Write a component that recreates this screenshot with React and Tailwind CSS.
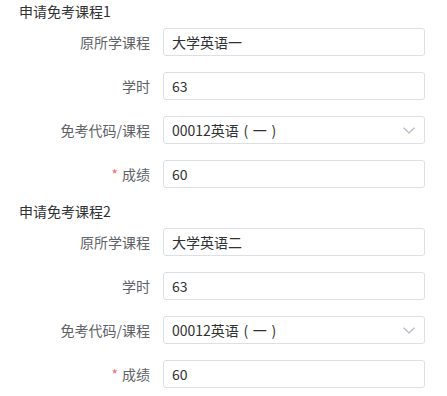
const sections = [
  { title: "申请免考课程1", course: "大学英语一" },
  { title: "申请免考课程2", course: "大学英语二" },
];

function Row({ label, required, children }) {
  return (
    <div className="flex items-center h-[28px]">
      <label className="w-[150px] text-right text-[14px] leading-[28px] text-[#606266] shrink-0">
        {required && <span className="text-[#f56c6c] mr-[4px]">*</span>}
        {label}
      </label>
      <div className="ml-[13px] w-[262px]">{children}</div>
    </div>
  );
}

function Box({ children, select }) {
  return (
    <div className="relative h-[28px] border border-[#dcdfe6] rounded-[3px] bg-white pl-[8px] flex items-center text-[14px] text-[#303133]">
      <span>{children}</span>
      {select && (
        <svg
          className="absolute right-[9px] top-[10px]"
          width="12"
          height="7"
          viewBox="0 0 12 7"
          fill="none"
        >
          <path d="M0.5 0.7 L6 6 L11.5 0.7" stroke="#b4b8c0" strokeWidth="1.2" />
        </svg>
      )}
    </div>
  );
}

export default function App() {
  return (
    <div
      className="w-[447px] h-[396px] bg-white overflow-hidden"
      style={{ fontFamily: '"Noto Sans CJK SC", "Noto Sans", sans-serif' }}
    >
      {sections.map((s, i) => (
        <section key={i} className="h-[200px]">
          <h3 className="pl-[19px] text-[14px] leading-[22px] font-normal text-[#303133] mb-[6px]">
            {s.title}
          </h3>
          <div className="flex flex-col gap-[16px]">
            <Row label="原所学课程">
              <Box>{s.course}</Box>
            </Row>
            <Row label="学时">
              <Box>63</Box>
            </Row>
            <Row label="免考代码/课程">
              <Box select>
                00012英语
                <span className="inline-block w-[14px] text-center">(</span>
                一
                <span className="inline-block w-[14px] text-center">)</span>
              </Box>
            </Row>
            <Row label="成绩" required>
              <Box>60</Box>
            </Row>
          </div>
        </section>
      ))}
    </div>
  );
}
